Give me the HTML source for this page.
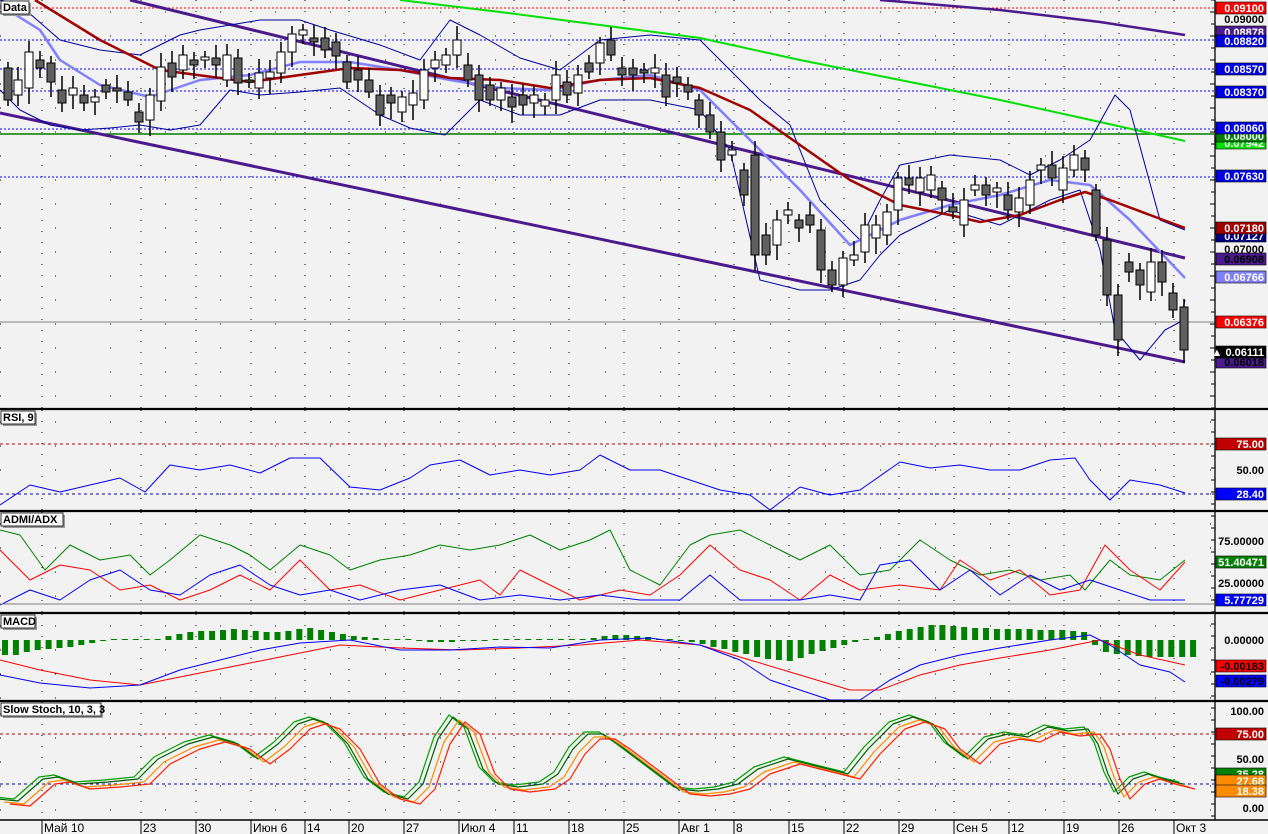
<!DOCTYPE html>
<html><head><meta charset="utf-8"><style>
html,body{margin:0;padding:0;background:#f2f2f2;width:1268px;height:834px;overflow:hidden}
svg{display:block}
text{font-family:"Liberation Sans",sans-serif;font-size:11px;font-weight:bold}
</style></head><body>
<svg id="s" width="1268" height="834" xmlns="http://www.w3.org/2000/svg">
<rect width="1268" height="834" fill="#f2f2f2"/>
<g id="g"></g>
</svg>
<script>
const NS="http://www.w3.org/2000/svg",G=document.getElementById('g');
function el(t,a,txt){const e=document.createElementNS(NS,t);for(const k in a)e.setAttribute(k,a[k]);if(txt!=null)e.textContent=txt;G.appendChild(e);return e;}
function pl(p,c,w,d){el('polyline',{points:p.map(q=>q.join(',')).join(' '),fill:'none',stroke:c,'stroke-width':w||1,'stroke-dasharray':d||'none','stroke-linejoin':'round'});}
function ln(x1,y1,x2,y2,c,w,d){el('line',{x1,y1,x2,y2,stroke:c,'stroke-width':w||1,'stroke-dasharray':d||'none'});}
const dates=[[42,'Май 10'],[141,'23'],[196,'30'],[251,'Июн 6'],[305,'14'],[349,'20'],[404,'27'],[459,'Июл 4'],[514,'11'],[569,'18'],[624,'25'],[679,'Авг 1'],[734,'8'],[789,'15'],[844,'22'],[899,'29'],[954,'Сен 5'],[1009,'12'],[1064,'19'],[1119,'26'],[1174,'Окт 3']];
const panels=[[0,408],[410,510],[512,612],[614,700],[702,819]];
panels.forEach(([a,b])=>{for(const [x] of dates){ln(x,a,x,b,'#000',1,'1 10');}
 for(let y=a+12;y<b;y+=24){ln(0,y,1214,y,'#000',1,'1 54');}});
ln(0,8,1214,8,'#f00',1,'2 2');
[40,69,91,129,177].forEach(y=>ln(0,y,1214,y,'#0000ff',1,'2 2'));
ln(0,134,1214,134,'#008000',1.5);
ln(0,322,1214,322,'#808080',1);
pl([[130,0],[1185,258]],'#4b1a8c',3);
pl([[0,113],[1185,362]],'#4b1a8c',3);
pl([[880,0],[1000,10],[1100,22],[1185,35]],'#4b1a8c',2.5);
pl([[400,0],[500,12],[600,25],[700,38],[800,60],[900,80],[1000,100],[1100,122],[1185,141]],'#00e000',2);
pl([[0,0],[20,5],[60,40],[100,50],[140,55],[180,35],[200,30],[230,25],[260,20],[300,20],[330,30],[380,45],[420,60],[450,20],[480,35],[520,58],[560,70],[600,40],[650,35],[700,40],[730,70],[760,100],[790,125],[820,200],[860,240],[880,200],[900,165],[950,155],[1000,160],[1030,175],[1060,160],[1090,140],[1115,95],[1130,110],[1160,220],[1185,230]],'#0000a0',1);
pl([[0,90],[20,110],[50,125],[80,130],[110,128],[140,125],[170,130],[200,125],[230,90],[260,95],[300,92],[340,88],[380,115],[410,128],[445,135],[480,100],[520,115],[560,115],[600,100],[650,100],[700,110],[730,150],[760,280],[800,290],[830,290],[860,280],[880,255],[900,235],[950,210],[1000,225],[1050,200],[1080,190],[1100,250],[1115,330],[1140,360],[1165,330],[1180,322],[1185,300]],'#0000a0',1);
pl([[0,5],[40,30],[60,60],[100,85],[150,97],[200,80],[250,75],[300,62],[350,62],[400,70],[450,80],[500,88],[550,90],[600,80],[650,75],[700,90],[750,140],[800,190],[850,245],[900,220],[950,205],[1000,195],[1050,180],[1090,185],[1130,220],[1185,278]],'#8080ff',2.5);
pl([[35,0],[100,40],[160,70],[250,82],[350,68],[400,70],[450,78],[500,80],[550,88],[600,80],[650,78],[700,88],[750,110],[800,145],[850,180],[900,205],[950,215],[980,222],[1020,215],[1060,200],[1085,192],[1110,200],[1150,215],[1185,228]],'#a00000',2.5);
const C=[[8,68,100,1],[18,80,95,0],[29,52,88,0],[40,60,68,1],[51,63,82,1],[62,90,103,1],[73,88,95,0],[84,95,103,1],[95,97,102,0],[106,85,92,1],[117,88,91,1],[128,92,100,1],[139,112,122,1],[150,95,120,0],[161,67,101,0],[172,63,77,1],[183,55,70,0],[194,60,65,1],[205,57,60,0],[216,58,65,1],[227,55,80,0],[238,58,83,1],[249,80,82,1],[259,73,88,0],[270,72,78,0],[281,52,73,0],[292,34,52,0],[303,30,35,0],[314,38,42,1],[325,38,50,1],[336,42,56,1],[347,62,82,1],[358,70,80,1],[369,80,92,1],[380,95,115,1],[391,95,103,1],[402,97,112,0],[413,93,105,0],[424,70,100,0],[435,60,68,0],[446,55,65,0],[457,40,55,0],[468,65,80,1],[479,75,100,1],[490,85,100,1],[501,88,100,0],[512,97,107,1],[523,95,105,1],[534,95,103,0],[545,100,106,0],[556,75,100,0],[567,82,95,1],[578,75,93,0],[589,63,72,1],[600,43,63,0],[611,40,55,1],[622,68,75,1],[633,68,75,1],[644,70,73,1],[655,68,73,0],[666,75,97,1],[677,77,83,1],[688,85,92,1],[699,100,115,1],[710,115,132,1],[721,132,160,1],[732,150,155,0],[744,170,195,1],[755,155,255,1],[766,235,255,1],[777,220,245,0],[788,210,215,0],[799,220,228,1],[810,215,225,1],[821,230,270,1],[832,270,285,1],[843,258,285,0],[854,255,260,0],[865,225,252,0],[876,225,238,0],[887,212,235,0],[898,178,210,0],[909,178,185,1],[920,178,192,0],[931,175,190,0],[942,188,200,1],[953,207,212,1],[964,200,225,0],[975,185,190,0],[986,185,195,1],[997,188,192,0],[1008,195,210,1],[1019,198,212,0],[1030,180,205,0],[1041,165,170,0],[1052,165,178,1],[1063,168,190,0],[1074,155,170,0],[1085,158,170,1],[1096,190,235,1],[1107,240,295,1],[1118,295,340,1],[1129,262,272,1],[1140,270,285,1],[1151,262,292,0],[1162,262,282,1],[1173,293,310,1],[1184,307,350,1]];
C.forEach(([x,t,b,d],i)=>{const hi=t-6-(i*7%9),lo=b+6+(i*5%11);ln(x,hi,x,lo,'#000',1.5);el('rect',{x:x-4,y:t,width:8,height:Math.max(b-t,2),fill:d?'#606060':'#fff',stroke:'#000','stroke-width':1});});
ln(0,444,1214,444,'#c00000',1,'3 3');ln(0,494,1214,494,'#0000c0',1,'3 3');
pl([[0,505],[30,485],[60,492],[90,485],[120,478],[145,492],[170,465],[200,470],[230,465],[260,473],[290,458],[320,458],[350,487],[380,490],[410,478],[430,465],[460,460],[490,475],[520,470],[550,475],[580,470],[600,455],[630,470],[660,470],[690,480],[720,490],[750,495],[770,510],[800,487],[830,495],[860,490],[900,462],[930,468],[960,465],[990,470],[1020,470],[1050,460],[1075,458],[1090,480],[1110,500],[1130,480],[1160,485],[1185,493]],'#0000ff',1);
pl([[0,530],[20,535],[45,570],[70,545],[100,560],[130,555],[150,575],[170,560],[200,535],[230,545],[250,555],[270,570],[300,545],[330,555],[350,570],[380,560],[410,555],[440,545],[470,550],[500,545],[530,535],[560,550],[590,540],[610,530],[630,570],[660,585],[690,545],[710,535],[740,530],[770,545],[800,560],[830,545],[860,575],[890,570],[920,540],[950,560],[980,575],[1010,570],[1040,580],[1070,575],[1085,590],[1110,560],[1130,575],[1160,580],[1185,560]],'#008000',1);
pl([[0,550],[30,580],[60,565],[90,570],[120,590],[150,585],[180,600],[210,590],[240,575],[270,590],[300,560],[330,590],[360,585],[400,600],[440,590],[480,580],[500,595],[520,570],[550,585],[580,600],[620,590],[650,595],[680,575],[710,545],[740,570],[770,580],[800,600],[830,575],[860,590],[900,585],[940,590],[960,560],[990,580],[1020,570],[1050,595],[1080,590],[1105,545],[1130,570],[1160,590],[1185,562]],'#ff0000',1);
pl([[0,605],[30,590],[60,600],[90,580],[120,570],[150,590],[180,595],[210,575],[240,565],[270,585],[300,595],[330,590],[360,600],[400,590],[440,585],[480,600],[520,595],[560,600],[600,595],[640,600],[680,600],[710,575],[740,600],[770,600],[800,600],[830,595],[860,600],[880,565],[910,560],[940,590],[970,570],[1000,595],[1030,575],[1060,590],[1090,580],[1120,590],[1150,600],[1185,600]],'#0000ff',1);
ln(0,604,1214,604,'#808080',1);
const H=[-15,-15,-12,-10,-9,-8,-7,-5,-3,-1,0,0,0,0,1,4,6,8,9,9,10,11,10,9,8,8,9,11,12,10,8,6,4,3,2,1,0,0,-1,-2,-2,-2,-1,-1,-1,0,0,0,0,0,0,0,0,1,2,4,5,5,4,3,1,0,-1,-2,-4,-7,-9,-12,-14,-17,-19,-20,-21,-18,-14,-11,-8,-5,-2,0,3,6,9,11,13,15,15,14,13,12,12,11,11,11,11,10,10,10,9,8,-5,-12,-14,-15,-16,-17,-17,-17,-17,-17];
H.forEach((h,i)=>{const x=5+i*10.9;if(h===0){el('rect',{x:x-3,y:639,width:6,height:1,fill:'#008000'});return;}el('rect',{x:x-3,y:h>0?640-h:640,width:6,height:Math.abs(h),fill:'#008000'});});
pl([[0,660],[40,670],[90,680],[140,685],[190,675],[240,665],[290,655],[340,645],[400,648],[460,650],[520,648],[580,645],[640,640],[700,645],[750,660],[800,675],[850,690],[880,690],[920,675],[960,665],[1000,658],[1050,650],[1100,640],[1140,655],[1185,665]],'#ff0000',1);
pl([[0,675],[40,683],[90,688],[140,685],[180,670],[220,660],[260,650],[300,643],[350,640],[400,650],[450,650],[500,647],[550,648],[600,640],[650,638],[700,645],[740,660],[770,680],[800,690],[830,700],[860,700],[890,680],[920,665],[960,655],[1000,648],[1050,640],[1090,635],[1110,645],[1140,665],[1170,672],[1185,682]],'#0000ff',1);
ln(0,734,1214,734,'#c00000',1,'3 3');ln(0,784,1214,784,'#0000c0',1,'3 3');
const S=[[0,800],[20,802],[45,780],[60,778],[80,785],[110,783],[140,780],[160,760],[190,745],[215,738],[240,745],[260,760],[280,745],[300,725],[315,720],[330,725],[350,745],[370,780],[390,795],[410,800],[425,785],[440,740],[455,718],[470,730],[485,770],[500,785],[520,788],[545,785],[560,775],[575,750],[590,735],[605,735],[620,745],[640,760],[660,775],[680,790],[700,792],[720,790],[740,785],[760,770],[790,760],[810,765],[830,770],[850,775],[870,750],[895,725],[915,718],[935,725],[950,745],[970,760],[990,740],[1010,735],[1030,738],[1050,728],[1070,732],[1090,730],[1100,745],[1110,775],[1120,795],[1135,780],[1150,775],[1165,780],[1185,785]];
[['#00a000',-6,-3],['#006000',-2,-1],['#ff8c00',4,2],['#ff2000',10,4]].forEach(([c,dx,dy])=>pl(S.map(([x,y])=>[x+dx,Math.min(812,Math.max(712,y+dy))]),c,1.2));
[409,511,613,701].forEach(y=>ln(0,y,1268,y,'#000',2.2));
el('rect',{x:1215,y:0,width:53,height:834,fill:'#f2f2f2'});
[409,511,613,701].forEach(y=>ln(1215,y,1268,y,'#000',2.2));
ln(1215,0,1215,820,'#000',1.3);
for(let y=0;y<820;y+=12)ln(1211,y,1215,y,'#000',1);
el('rect',{x:0,y:820,width:1268,height:14,fill:'#f2f2f2'});
ln(0,820,1268,820,'#000',1.5);
dates.forEach(([x,t])=>{ln(x,820,x,834,'#000',1);el('text',{x:x+2,y:832,style:'font-weight:normal;font-size:12px'},t);});
function lab(y,t,bg,fg){if(bg)el('rect',{x:1216,y:y-6,width:50,height:12,fill:bg,stroke:'#000','stroke-width':0.6});el('text',{x:1264,y:y+4,'text-anchor':'end',fill:fg||'#000'},t);}
[[32,'0.08878','#4b1a8c','#fff'],[8,'0.09100','#ff0000','#fff'],[19,'0.09000'],[41,'0.08820','#0000e0','#fff'],[69,'0.08570','#0000e0','#fff'],[92,'0.08370','#0000e0','#fff'],[143,'0.07942','#00e000','#fff'],[136,'0.08000','#008000','#fff'],[128,'0.08060','#0000e0','#fff'],[176,'0.07630','#0000e0','#fff'],[236,'0.07127','#000080','#fff'],[228,'0.07180','#a00000','#fff'],[249,'0.07000'],[259,'0.06908','#4b1a8c','#000'],[277,'0.06766','#8080ff','#fff'],[322,'0.06376','#ff0000','#fff'],[362,'0.06018','#4b1a8c','#000'],[352,'▲ 0.06111','#000','#fff'],
[444,'75.00','#c00000','#fff'],[470,'50.00'],[494,'28.40','#0000ff','#fff'],[541,'75.00000'],[562,'51.40471','#008000','#fff'],[583,'25.00000'],[600,'5.77729','#0000ff','#fff'],[640,'0.00000'],[666,'-0.00183','#ff0000','#000'],[681,'-0.00279','#0000ff','#000'],[711,'100.00'],[734,'75.00','#c00000','#fff'],[759,'50.00'],[774,'35.28','#008000','#fff'],[781,'27.68','#ff8c00','#fff'],[791,'18.38','#ff8c00','#fff'],[808,'0.00']].forEach(a=>lab(...a));
function title(x,y,w,t){el('rect',{x:x+2,y:y+2,width:w,height:13,fill:'#999'});el('rect',{x,y,width:w,height:13,fill:'#fff',stroke:'#000','stroke-width':0.8});el('text',{x:x+2,y:y+10},t);}
title(1,1,28,'Data');title(1,411,34,'RSI, 9');title(1,513,62,'ADMI/ADX');title(1,615,34,'MACD');title(1,703,100,'Slow Stoch, 10, 3, 3');
</script>
</body></html>
